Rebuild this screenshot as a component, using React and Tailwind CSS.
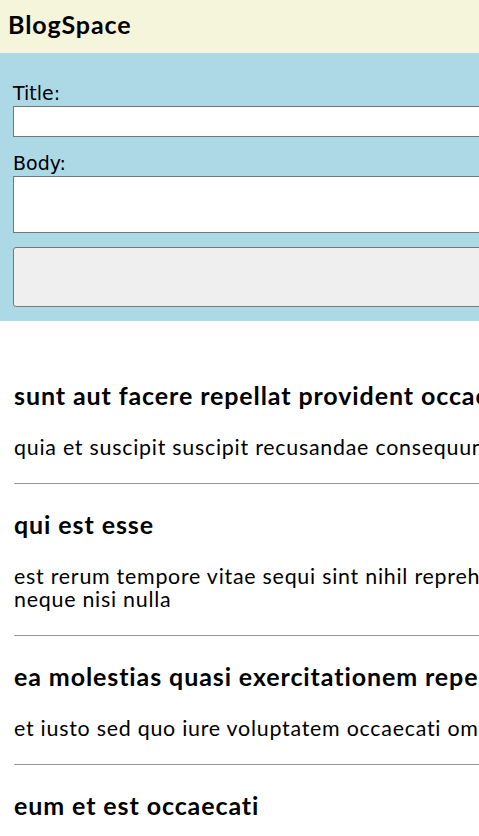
import React from "react";

const posts = [
  {
    id: 1,
    title: "sunt aut facere repellat provident occaecati excepturi optio reprehenderit",
    lines: ["quia et suscipit suscipit recusandae consequuntur expedita et cum reprehenderit molestiae ut ut quas totam nostrum rerum est autem sunt rem eveniet architecto"],
  },
  {
    id: 2,
    title: "qui est esse",
    lines: [
      "est rerum tempore vitae sequi sint nihil reprehenderit dolor beatae ea dolores neque fugiat blanditiis voluptate porro vel nihil molestiae ut reiciendis qui aperiam non debitis possimus qui",
      "neque nisi nulla",
    ],
  },
  {
    id: 3,
    title: "ea molestias quasi exercitationem repellat qui ipsa sit aut",
    lines: ["et iusto sed quo iure voluptatem occaecati omnis eligendi aut ad voluptatem doloribus vel accusantium quis pariatur molestiae porro eius odio et labore et velit aut"],
  },
  {
    id: 4,
    title: "eum et est occaecati",
    lines: ["ullam et saepe reiciendis voluptatem adipisci sit amet autem assumenda provident rerum culpa quis hic commodi nesciunt rem tenetur doloremque ipsam iure quis sunt voluptatem rerum illo velit"],
  },
];

export default function App() {
  return (
    <div className="w-full min-h-screen overflow-hidden bg-white text-black font-['Lato',sans-serif] [font-variant-ligatures:none]">
      <div className="w-[1600px]">
        {/* Header */}
        <header className="h-[53px] bg-[#f5f5dc] flex items-center px-2 pb-[5px]">
          <h1 className="text-[25px] leading-[30px] font-bold tracking-[0.9px]">BlogSpace</h1>
        </header>

        {/* New post form */}
        <form className="bg-[#add8e6] px-[13px] pt-[27px] pb-[14px] flex flex-col font-['DejaVu_Sans',sans-serif]">
          <label className="text-[19px] leading-[26px]">Title:</label>
          <input className="h-[31px] bg-white border border-[#767676]" />
          <label className="text-[19px] leading-[26px] mt-[13px]">Body:</label>
          <textarea className="h-[57px] bg-white border border-[#767676] resize-none" />
          <button
            type="button"
            className="h-[60px] mt-[14px] bg-[#efefef] border border-[#767676] rounded-[3px]"
          ></button>
        </form>

        {/* Posts */}
        <div className="px-[14px] pt-[60px]">
          {posts.map((p) => (
            <div key={p.id}>
              <h3 className="text-[25px] leading-[28px] font-bold tracking-[0.9px] whitespace-nowrap">
                {p.title}
              </h3>
              <div className="mt-[27px] text-[21.4px] leading-[23px] tracking-[0.75px]">
                {p.lines.map((l, i) => (
                  <p key={i} className="whitespace-nowrap">
                    {l}
                  </p>
                ))}
              </div>
              <hr className="mt-[24px] mb-[26px] border-t border-[#999]" />
            </div>
          ))}
        </div>
      </div>
    </div>
  );
}
